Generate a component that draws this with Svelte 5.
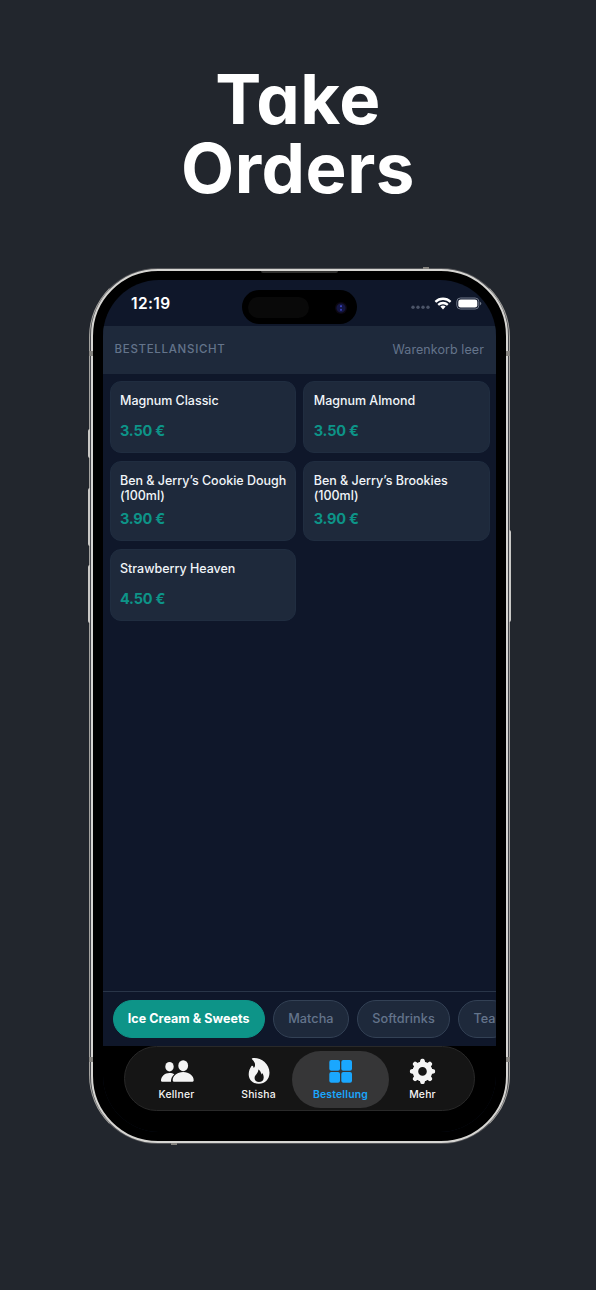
<script lang="ts">
  interface Product {
    name: string;
    price: string;
  }

  const products: Product[] = [
    { name: "Magnum Classic", price: "3.50 €" },
    { name: "Magnum Almond", price: "3.50 €" },
    { name: "Ben & Jerry’s Cookie Dough (100ml)", price: "3.90 €" },
    { name: "Ben & Jerry’s Brookies (100ml)", price: "3.90 €" },
    { name: "Strawberry Heaven", price: "4.50 €" },
  ];
  const categories = ["Ice Cream & Sweets", "Matcha", "Softdrinks", "Tea"];
  const tabs = ["Kellner", "Shisha", "Bestellung", "Mehr"];

  let category = $state("Ice Cream & Sweets");
  let tab = $state("Bestellung");
</script>

<main>
  <h1>Take<br />Orders</h1>

  <div class="phone">
    <i class="key action"></i>
    <i class="key vol-up"></i>
    <i class="key vol-down"></i>
    <i class="key power"></i>
    <i class="band tl"></i>
    <i class="band tr"></i>
    <i class="band bl"></i>
    <i class="band br"></i>
    <i class="band top"></i>
    <i class="band bottom"></i>
    <div class="bezel">
      <i class="speaker"></i>
      <div class="screen">
        <div class="status">
          <span class="time">12:19</span>
          <div class="island"><i class="sensor"></i><i class="lens"></i></div>
          <svg class="signals" width="70" height="14" viewBox="0 0 70 14">
            <g fill="#4b5468">
              <circle cx="2" cy="10.3" r="1.7" />
              <circle cx="7" cy="10.3" r="1.7" />
              <circle cx="12" cy="10.3" r="1.7" />
              <circle cx="17" cy="10.3" r="1.7" />
            </g>
            <g fill="none" stroke="#fff" stroke-width="2.3">
              <path d="M24.4 4.8a11 11 0 0 1 15.2 0" />
              <path d="M27.2 7.9a7 7 0 0 1 9.6 0" />
            </g>
            <path d="M29.4 9.6a4 4 0 0 1 5.2 0L32 12.4z" fill="#fff" />
            <rect x="45.8" y="1" width="22" height="11" rx="3.6" fill="none" stroke="#737b8c" />
            <rect x="47.3" y="2.5" width="19" height="8" rx="2.3" fill="#fff" />
            <path d="M69 4.7q1.3.6 1.3 1.8t-1.3 1.8z" fill="#737b8c" />
          </svg>
        </div>

        <header>
          <span class="title">BESTELLANSICHT</span>
          <span class="cart">Warenkorb leer</span>
        </header>

        <section class="products">
          {#each products as product}
            <div class="card">
              <div class="name">{product.name}</div>
              <div class="price">{product.price}</div>
            </div>
          {/each}
        </section>

        <nav class="chips">
          {#each categories as c}
            <button class:active={category === c} onclick={() => (category = c)}>{c}</button>
          {/each}
        </nav>

        <footer>
          <div class="tabs">
            {#each tabs as t}
              <button class:active={tab === t} onclick={() => (tab = t)}>
                <svg width="34" height="28" viewBox="0 0 34 28" fill="currentColor">
                  {#if t === "Kellner"}
                    <ellipse cx="9.5" cy="8.7" rx="4.2" ry="4.8" />
                    <path d="M1 22.8c0-4.4 3.7-7.9 8.5-7.9 2 0 3.600.5 4.800 1.300-2 1.800-3.300 4.300-3.300 6.600v1H3C1.700 23.800 1 23.600 1 22.800z" />
                    <ellipse cx="23.2" cy="7.700" rx="4.900" ry="5.500" />
                    <path d="M12.700 22.300c0-4.500 4.500-8.200 10.500-8.200s10.500 3.700 10.500 8.200c0 1-.8 1.500-2 1.500h-17c-1.200 0-2-.5-2-1.500z" />
                  {:else if t === "Shisha"}
                    <path
                      fill-rule="evenodd"
                      d="M10.300.2C18-1 27.500 5 27.500 14.800c0 6.500-4.500 11-10.600 11C10.800 25.800 6.700 21.800 6.700 16.300c0-3.500 1.400-6 2.800-8.200.5-.7 1.300-.6 1.600.2l.7 1.600c1.900-2 2-4.900-1.800-8.600-.4-.5-.3-1 .3-1.100zM16.200 11.400c.7 3.400-3.600 5.300-3.600 8.600 0 2.600 1.900 4.100 4.300 4.100 2.800 0 4.800-1.900 4.800-4.700 0-1.500-.5-2.700-1.200-3.800-.3-.4-.7-.4-.9.100l-.5 1c.1-2.500-.9-4.500-2.900-5.300z"
                    />
                  {:else if t === "Bestellung"}
                    <rect x="5.300" y="2.100" width="10.700" height="10.700" rx="2" />
                    <rect x="17.300" y="2.100" width="10.700" height="10.700" rx="2" />
                    <rect x="5.300" y="14.100" width="10.700" height="10.700" rx="2" />
                    <rect x="17.300" y="14.100" width="10.700" height="10.700" rx="2" />
                  {:else}
                    <circle cx="16.500" cy="13.400" r="7.100" fill="none" stroke="currentColor" stroke-width="5.600" />
                    {#each [0, 45, 90, 135, 180, 225, 270, 315] as angle}
                      <path
                        d="M13.600 5.500l.7-3.200q.3-1.500 1.600-1.500h1.200q1.300 0 1.600 1.500l.7 3.200z"
                        transform="rotate({angle} 16.500 13.400)"
                      />
                    {/each}
                  {/if}
                </svg>
                <span>{t}</span>
              </button>
            {/each}
          </div>
        </footer>
      </div>
    </div>
  </div>
</main>

<style>
  :global(body) {
    margin: 0;
    background: #22262d;
  }
  main {
    box-sizing: border-box;
    width: 596px;
    height: 1290px;
    padding-top: 65px;
    overflow: hidden;
    background: #22262d;
    font-family: Inter, sans-serif;
  }
  h1 {
    margin: 0 0 65px;
    height: 138px;
    color: #fff;
    font-size: 69px;
    font-weight: 700;
    line-height: 69px;
    letter-spacing: 0.5px;
    text-align: center;
    font-feature-settings: "cv11";
  }
  button {
    border: 0;
    padding: 0;
    font-family: inherit;
    white-space: nowrap;
  }

  .phone {
    position: relative;
    box-sizing: border-box;
    width: 421px;
    height: 876px;
    margin-left: 89px;
    padding: 0 1px;
    border: 1px solid #a3a29f;
    border-top-color: #55565a;
    border-bottom-color: #55565a;
    border-radius: 69px;
    background: #44454a;
  }
  .bezel {
    position: relative;
    box-sizing: border-box;
    height: 874px;
    padding: 9px 10px;
    border: 2px solid #d6d5d2;
    border-radius: 67px;
    background: #000;
  }
  .key {
    position: absolute;
    width: 2px;
    background: #c9c8c5;
    border-radius: 2px 0 0 2px;
  }
  .action {
    left: -2px;
    top: 160px;
    height: 29px;
  }
  .vol-up {
    left: -2px;
    top: 219px;
    height: 58px;
  }
  .vol-down {
    left: -2px;
    top: 296px;
    height: 58px;
  }
  .power {
    right: -2px;
    top: 261px;
    height: 92px;
    border-radius: 0 2px 2px 0;
  }
  .band {
    position: absolute;
    z-index: 1;
    width: 4px;
    height: 5px;
    background: #85837f;
  }
  .tl { left: -1px; top: 82px; }
  .tr { right: -1px; top: 82px; }
  .bl { left: -1px; top: 788px; }
  .br { right: -1px; top: 788px; }
  .top {
    left: 333px;
    top: -2px;
    width: 6px;
    height: 2px;
  }
  .bottom {
    left: 81px;
    bottom: -2px;
    width: 6px;
    height: 2px;
  }
  .speaker {
    position: absolute;
    left: 168px;
    top: 0;
    width: 77px;
    height: 2px;
    border-radius: 0 0 2px 2px;
    background: #30302f;
  }

  .screen {
    display: flex;
    flex-direction: column;
    height: 852px;
    overflow: hidden;
    border-radius: 56px;
    background: #0f172a;
  }
  .status {
    position: relative;
    flex: none;
    display: flex;
    justify-content: space-between;
    align-items: flex-start;
    box-sizing: border-box;
    height: 46px;
    padding: 14px 15px 0 28px;
  }
  .time {
    color: #fff;
    font-size: 15.500px;
    font-weight: 600;
    line-height: 20px;
    letter-spacing: 0.4px;
  }
  .signals {
    margin-top: 3px;
    overflow: visible;
  }
  .island {
    position: absolute;
    left: 139px;
    top: 10px;
    width: 115px;
    height: 34px;
    border-radius: 17px;
    background: #000;
  }
  .sensor {
    position: absolute;
    left: 6px;
    top: 7px;
    width: 61px;
    height: 21px;
    border-radius: 11px;
    background: #090909;
  }
  .lens {
    position: absolute;
    right: 10px;
    top: 12px;
    width: 12px;
    height: 12px;
    border-radius: 50%;
    background: radial-gradient(circle at 50% 35%, #3943bd 0 0.5px, transparent 1.5px),
      radial-gradient(circle at 50% 65%, #343db0 0 0.5px, transparent 1.5px),
      radial-gradient(circle, #131542 0 4px, #0c0812 5px);
  }

  header {
    flex: none;
    display: flex;
    justify-content: space-between;
    align-items: center;
    box-sizing: border-box;
    height: 48px;
    padding: 0 12px 2px 11.500px;
    background: #1e293b;
    color: #64748b;
  }
  .title {
    font-size: 11.500px;
    font-weight: 500;
    letter-spacing: 0.7px;
  }
  .cart {
    font-size: 12.500px;
    letter-spacing: 0.080px;
  }

  .products {
    flex: 1;
    display: grid;
    grid-template-columns: 1fr 1fr;
    align-content: start;
    gap: 7.500px;
    padding: 7px 6.500px;
  }
  .card {
    display: flex;
    flex-direction: column;
    justify-content: space-between;
    box-sizing: border-box;
    min-height: 72px;
    padding: 11px 4px 11px 9.500px;
    border: 1px solid #202d40;
    border-radius: 11px;
    background: #1e293b;
  }
  .name {
    color: #f1f5f9;
    font-size: 12.500px;
    font-weight: 500;
    line-height: 15.700px;
    letter-spacing: -0.020px;
  }
  .price {
    margin-top: 5.500px;
    color: #0d9488;
    font-size: 14.500px;
    font-weight: 700;
    line-height: 20px;
    letter-spacing: -0.2px;
  }

  .chips {
    flex: none;
    display: flex;
    gap: 8px;
    box-sizing: border-box;
    height: 55px;
    padding: 8px 9.500px 0;
    overflow: hidden;
    border-top: 1px solid #293548;
  }
  .chips button {
    flex: none;
    box-sizing: border-box;
    height: 38px;
    padding: 0 14.300px 1px;
    border: 1px solid #334155;
    border-radius: 19px;
    background: #1e293b;
    color: #64748b;
    font-size: 12.700px;
    font-weight: 500;
    letter-spacing: 0.050px;
  }
  .chips button.active {
    border-color: #0d9488;
    background: #0d9488;
    color: #fff;
    font-size: 12.500px;
    font-weight: 700;
  }

  footer {
    flex: none;
    box-sizing: border-box;
    height: 86px;
    padding: 0 21px;
    background: #000;
  }
  .tabs {
    display: grid;
    grid-template-columns: repeat(4, 82px);
    justify-content: center;
    box-sizing: border-box;
    height: 65px;
    padding-top: 4px;
    border: 1px solid #292929;
    border-radius: 33px;
    background: #151515;
  }
  .tabs button {
    display: flex;
    flex-direction: column;
    align-items: center;
    box-sizing: border-box;
    height: 57px;
    padding-top: 7px;
    background: none;
    color: #f4f4f4;
    font-size: 10.400px;
    font-weight: 500;
    line-height: 17px;
    letter-spacing: 0.2px;
  }
  .tabs button.active {
    margin: 0 -7.500px;
    border-radius: 29px;
    background: #363637;
    color: #1aa7fe;
    font-weight: 600;
  }
  .tabs svg {
    flex: none;
  }
</style>
